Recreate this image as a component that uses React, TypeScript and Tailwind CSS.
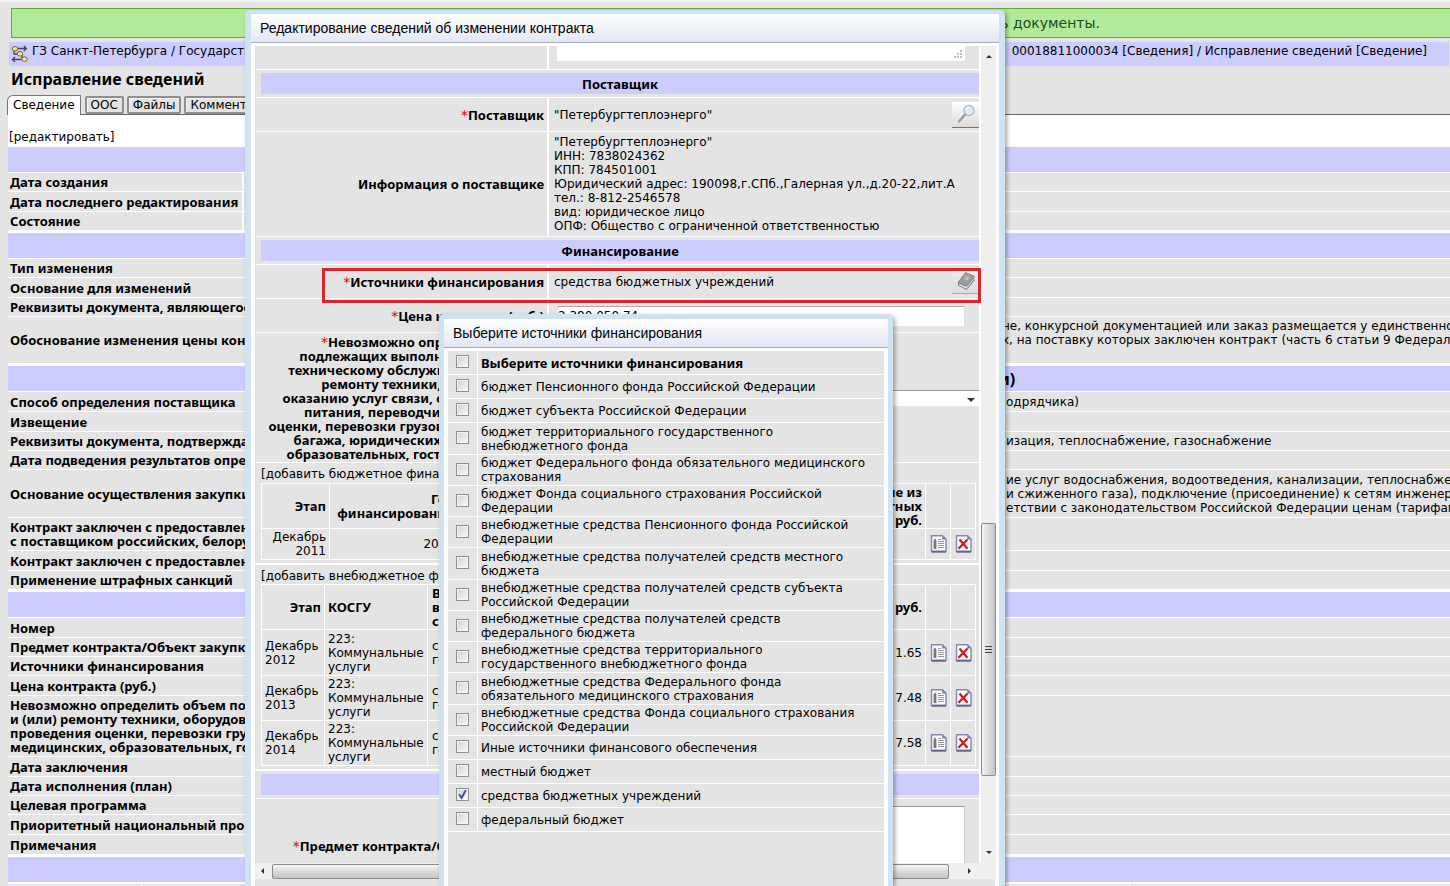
import type { ReactNode } from "react";

type Row = { label: ReactNode; value?: ReactNode; h: string };

const H19 = "h-[19px]";
const H20 = "h-[20px]";

const general: Row[] = [
  { label: "Дата создания", h: H19 },
  { label: "Дата последнего редактирования", h: H20 },
  { label: "Состояние", h: H19 },
];

const change: Row[] = [
  { label: "Тип изменения", h: H19 },
  { label: "Основание для изменений", h: H20 },
  { label: "Реквизиты документа, являющегося", h: H19 },
  {
    label: "Обоснование изменения цены контракта",
    value: (
      <>
        не, конкурсной документацией или заказ размещается у единственного
        <br />
        х, на поставку которых заключен контракт (часть 6 статьи 9 Федерального
        <br />
        &nbsp;
      </>
    ),
    h: "h-[47px]",
  },
];

const supplier: Row[] = [
  { label: "Способ определения поставщика", value: "одрядчика)", h: H20 },
  { label: "Извещение", h: H20 },
  { label: "Реквизиты документа, подтверждающего", value: "изация, теплоснабжение, газоснабжение", h: H19 },
  { label: "Дата подведения результатов определения", h: H19 },
  {
    label: "Основание осуществления закупки",
    value: (
      <>
        ие услуг водоснабжения, водоотведения, канализации, теплоснабжения
        <br />
        и сжиженного газа), подключение (присоединение) к сетям инженерно
        <br />
        етствии с законодательством Российской Федерации ценам (тарифам)
      </>
    ),
    h: "h-[48px]",
  },
  {
    label: (
      <>
        Контракт заключен с предоставлением
        <br />с поставщиком российских, белорусских
      </>
    ),
    h: "h-[33px]",
  },
  { label: "Контракт заключен с предоставлением", h: H20 },
  { label: "Применение штрафных санкций", h: H19 },
];

const contract: Row[] = [
  { label: "Номер", h: H20 },
  { label: "Предмет контракта/Объект закупки", h: H19 },
  { label: "Источники финансирования", h: H19 },
  { label: "Цена контракта (руб.)", h: H20 },
  {
    label: (
      <>
        Невозможно определить объем подлежащих
        <br />
        и (или) ремонту техники, оборудования
        <br />
        проведения оценки, перевозки грузов
        <br />
        медицинских, образовательных, гостиничных
      </>
    ),
    h: "h-[61px]",
  },
  { label: "Дата заключения", h: H20 },
  { label: "Дата исполнения (план)", h: H19 },
  { label: "Целевая программа", h: H19 },
  { label: "Приоритетный национальный проект", h: H20 },
  { label: "Примечания", h: H20 },
];

const PLAIN = "font-['DejaVu_Sans',sans-serif] text-[12px] font-normal";
const BOLD = "font-['Noto_Sans',sans-serif] text-[13px] font-bold";

function Section({ children }: { children?: ReactNode }) {
  return (
    <h2 className="mt-0.5 mb-px flex h-[25px] items-center bg-[#ccccff] pl-[991px] font-['Noto_Sans',sans-serif] text-[16px] font-bold">
      {children}
    </h2>
  );
}

function InfoTable({ rows, col }: { rows: Row[]; col: string }) {
  return (
    <table className="w-full table-fixed border-separate border-spacing-0 overflow-hidden">
      <tbody>
        {rows.map((r, i) => (
          <tr key={i}>
            <th
              scope="row"
              className={`${col} ${r.h} ${BOLD} border-b border-white bg-[#e4e4e4] p-0 pl-0.5 text-left align-middle whitespace-nowrap`}
            >
              {r.label}
            </th>
            <td className={`${PLAIN} overflow-hidden border-b border-white bg-[#e4e4e4] p-0 pl-1 align-middle whitespace-nowrap`}>
              {r.value}
            </td>
          </tr>
        ))}
      </tbody>
    </table>
  );
}

function PathIcon() {
  return (
    <svg width="18" height="18" viewBox="0 0 18 18" fill="none" aria-hidden="true">
      <g stroke="#44445c" strokeWidth="1.3">
        <path d="M6 3.5h9M12.8 1l2.6 2.5L12.8 6M3 5.5v3.5h4M11 9v4.5M12 14.5H1.5M4 12l-2.6 2.5L4 17" />
      </g>
      <g fill="#f1e884" stroke="#6e6a38" strokeWidth="1">
        <ellipse cx="4" cy="3.8" rx="2.8" ry="2.3" />
        <ellipse cx="9" cy="8.8" rx="2.8" ry="2.3" />
        <ellipse cx="13.5" cy="14.2" rx="2.8" ry="2.3" />
      </g>
    </svg>
  );
}

function MagnifierIcon() {
  return (
    <svg width="20" height="20" viewBox="0 0 20 20" fill="none" aria-hidden="true">
      <path d="M3 17.5 9 10.5" stroke="#9a9a9a" strokeWidth="2.4" strokeLinecap="round" />
      <circle cx="13" cy="6.5" r="5" fill="#dcebf5" stroke="#b0bac2" strokeWidth="1.4" />
      <path d="M10 6a3.2 3.2 0 0 1 3-2.8" stroke="#fff" strokeWidth="1.2" />
    </svg>
  );
}

function BookIcon() {
  return (
    <svg width="20" height="20" viewBox="0 0 20 20" aria-hidden="true">
      <path d="M2 11.5v3l8.5 4.5 8-9.5V6.5z" fill="#7d7d7d" />
      <path d="M3 12.5v1.6l7.3 3.7 7.4-9V7.3L10.3 16z" fill="#efefef" />
      <path d="M2 11.5 9.5 1.5l9 3.8L10.3 15.5z" fill="#9c9c9c" stroke="#808080" strokeWidth=".8" />
      <path d="m9.2 5 5 2.2M8 7l3 1.4M12 6.2l-1.2 3.2" stroke="#cacaca" strokeWidth="1" fill="none" />
    </svg>
  );
}

function SheetIcon({ kind }: { kind: "edit" | "delete" }) {
  return (
    <svg width="17" height="18" viewBox="0 0 17 18" fill="none" aria-hidden="true">
      <path d="M1.5.8h11L16 4.3v12H1.5z" fill="#fafafe" stroke="#8585ad" strokeWidth="1.4" strokeLinejoin="round" />
      <path d="M12.3.9v3.6h3.6z" fill="#77779c" />
      <path d="M1.5 17h14.5" stroke="#4f4f70" strokeWidth="1.2" />
      {kind === "edit" ? (
        <>
          <path d="M5 3.2 6.4 5.5V14H3.6V5.5z" fill="#777" />
          <path d="M8 4.5h3M8 6.5h6M8 8.5h6M8 10.5h6M8 12.5h6" stroke="#999" strokeWidth="1" />
        </>
      ) : (
        <path d="m4.5 4.5 8 9.3M12.5 4.5l-9 9.3" stroke="#cf1b22" strokeWidth="2.3" />
      )}
    </svg>
  );
}

function Arrow({ d }: { d: string }) {
  return (
    <svg width="8" height="8" viewBox="0 0 8 8" aria-hidden="true">
      <path d={d} fill="#333" />
    </svg>
  );
}

function DialogHeader({ children }: { children: ReactNode }) {
  return (
    <h2 className="flex h-[29px] shrink-0 items-center border-b border-[#a9abb5] bg-linear-to-b from-white to-[#e3e7f4] pl-[9px] font-['Liberation_Sans',Arial,sans-serif] text-[14px]">
      {children}
    </h2>
  );
}

const L = `${BOLD} w-[294px] border-r-2 border-b border-white p-0 pr-[3px] text-right align-middle whitespace-nowrap`;
const V = `${PLAIN} border-b border-white p-0 pl-[5px] text-left align-middle`;

function Star() {
  return <span className="font-['DejaVu_Sans',sans-serif] text-[14px] font-normal text-[#e00000]">*</span>;
}

function SectionRow({ children }: { children?: ReactNode }) {
  return (
    <tr>
      <th colSpan={2} className="h-7 border-b border-white p-0 pl-1.5 align-middle">
        <div className={`${BOLD} flex h-[21px] items-center justify-center bg-[#ccccff]`}>{children}</div>
      </th>
    </tr>
  );
}

const NT = "w-[715px] table-fixed border-separate border-spacing-0 border-t border-l border-white";
const NC = "border-r border-b border-white px-[3px] py-0 align-middle";

function ActionCells() {
  return (
    <>
      <td className={`${NC} w-[25px]`}>
        <button type="button" aria-label="Изменить" className="mx-auto block">
          <SheetIcon kind="edit" />
        </button>
      </td>
      <td className={`${NC} w-[25px]`}>
        <button type="button" aria-label="Удалить" className="mx-auto block">
          <SheetIcon kind="delete" />
        </button>
      </td>
    </>
  );
}

const extra = [
  { year: "2012", sum: "1.65", h: "h-[46px]" },
  { year: "2013", sum: "7.48", h: "h-[45px]" },
  { year: "2014", sum: "7.58", h: "h-[45px]" },
];

function EditDialog() {
  return (
    <section
      role="dialog"
      aria-label="Редактирование сведений об изменении контракта"
      className="absolute top-2 bottom-0 left-[245px] flex w-[760px] flex-col overflow-hidden rounded-t-[5px] border-x-6 border-t-4 border-[#d0e3f3] bg-white shadow-[2px_2px_4px_rgba(0,0,0,0.35)]"
    >
      <DialogHeader>Редактирование сведений об изменении контракта</DialogHeader>
      <div className="flex min-h-0 flex-1 gap-0.5 pt-[3px] pr-[3px] pl-1">
        <div className="relative min-w-0 flex-1 overflow-hidden">
          <table className="w-full table-fixed border-separate border-spacing-0 bg-[#e4e4e4]">
            <tbody>
              <tr>
                <th className={`${L} h-6`} />
                <td className={`${V} h-6`}>
                  <div className="flex h-[23px] items-start pl-[3px]">
                    <div className="flex h-[15px] w-[408px] items-end justify-end bg-white p-0.5">
                      <svg width="10" height="9" viewBox="0 0 10 9" aria-hidden="true">
                        <path d="M7 1h2M7 4h2M4 4h2M7 7h2M4 7h2M1 7h2" stroke="#aaa" strokeWidth="1.5" />
                      </svg>
                    </div>
                  </div>
                </td>
              </tr>
              <SectionRow>Поставщик</SectionRow>
              <tr>
                <th scope="row" className={`${L} h-[34px]`}>
                  <Star />
                  Поставщик
                </th>
                <td className={V}>
                  <div className="flex items-center justify-between">
                    "Петербургтеплоэнерго"
                    <button
                      type="button"
                      aria-label="Найти поставщика"
                      className="flex h-[26px] w-[27px] items-center justify-center border-b border-[#777] bg-linear-to-b from-white to-[#dcdcdc]"
                    >
                      <MagnifierIcon />
                    </button>
                  </div>
                </td>
              </tr>
              <tr>
                <th scope="row" className={`${L} h-[105px]`}>
                  Информация о поставщике
                </th>
                <td className={V}>
                  "Петербургтеплоэнерго"
                  <br />
                  ИНН: 7838024362
                  <br />
                  КПП: 784501001
                  <br />
                  Юридический адрес: 190098,г.СПб.,Галерная ул.,д.20-22,лит.А
                  <br />
                  тел.: 8-812-2546578
                  <br />
                  вид: юридическое лицо
                  <br />
                  ОПФ: Общество с ограниченной ответственностью
                </td>
              </tr>
              <SectionRow>Финансирование</SectionRow>
              <tr>
                <th scope="row" className={`${L} h-[34px]`}>
                  <Star />
                  Источники финансирования
                </th>
                <td className={V}>
                  <div className="flex items-center justify-between">
                    средства бюджетных учреждений
                    <button
                      type="button"
                      aria-label="Выбрать источники финансирования"
                      className="flex h-[25px] w-[27px] items-center justify-center border-b border-[#aaa] bg-linear-to-b from-[#eeeeee] to-[#dcdcdc]"
                    >
                      <BookIcon />
                    </button>
                  </div>
                </td>
              </tr>
              <tr>
                <th scope="row" className={`${L} h-[34px]`}>
                  <Star />
                  <label htmlFor="price">Цена контракта (руб.)</label>
                </th>
                <td className={V}>
                  <input
                    id="price"
                    defaultValue="2 380 050.74"
                    className="ml-[3px] block h-5 w-[408px] border border-t-[#aaa] border-r-[#ddd] border-b-white border-l-[#ddd] bg-white"
                  />
                </td>
              </tr>
              <tr>
                <th scope="row" className={`${L} h-[130px]`}>
                  <label htmlFor="volume">
                    <Star />
                    Невозможно определить объем
                    <br />
                    подлежащих выполнению работ по:
                    <br />
                    техническому обслуживанию и/или к
                    <br />
                    ремонту техники, оборудования,
                    <br />
                    оказанию услуг связи, общественного,
                    <br />
                    питания, переводчика, проведения
                    <br />
                    оценки, перевозки грузов, пассажиров и
                    <br />
                    багажа, юридических, медицинских,
                    <br />
                    образовательных, гостиничных услуг,
                  </label>
                </th>
                <td className={V}>
                  <div className="grid items-center pl-[3px]">
                    <select
                      id="volume"
                      className="col-start-1 row-start-1 h-4 w-full appearance-none border-t border-[#999] bg-white"
                    >
                      <option>Нет</option>
                      <option>Да</option>
                    </select>
                    <span className="pointer-events-none col-start-1 row-start-1 justify-self-end pt-1 pr-1">
                      <Arrow d="M0 2h8L4 6z" />
                    </span>
                  </div>
                </td>
              </tr>
              <tr>
                <td colSpan={2} className={`${PLAIN} h-[102px] border-b-2 border-white p-0 pt-1 pl-1.5 align-top`}>
                  <a href="#budget" className="block">
                    [добавить бюджетное финансирование]
                  </a>
                  <table className={`${NT} mt-0.5`}>
                    <thead>
                      <tr className={`${BOLD} text-right`}>
                        <th className={`${NC} h-[45px] w-[68px]`}>Этап</th>
                        <th className={`${NC} w-[128px]`}>
                          Год
                          <br />
                          финансирования
                        </th>
                        <th className={NC}>
                          Финансирование из
                          <br />
                          бюджетных
                          <br />
                          средств, руб.
                        </th>
                        <th className={`${NC} w-[25px]`} />
                        <th className={`${NC} w-[25px]`} />
                      </tr>
                    </thead>
                    <tbody>
                      <tr className="text-right">
                        <td className={`${NC} h-[31px]`}>
                          Декабрь
                          <br />
                          2011
                        </td>
                        <td className={NC}>2011</td>
                        <td className={NC} />
                        <ActionCells />
                      </tr>
                    </tbody>
                  </table>
                </td>
              </tr>
              <tr>
                <td colSpan={2} className={`${PLAIN} h-[206px] border-b-2 border-white p-0 pt-1 pl-1.5 align-top`}>
                  <a href="#extra" className="block">
                    [добавить внебюджетное финансирование]
                  </a>
                  <table className={`${NT} mt-px`}>
                    <thead>
                      <tr className={BOLD}>
                        <th className={`${NC} h-[45px] w-[63px] text-right`}>Этап</th>
                        <th className={`${NC} w-[103px] text-left`}>КОСГУ</th>
                        <th className={`${NC} w-[160px] pl-1 text-left`}>
                          Вид
                          <br />
                          внебюджетных
                          <br />
                          средств
                        </th>
                        <th className={`${NC} text-right`}>Сумма, руб.</th>
                        <th className={`${NC} w-[25px]`} />
                        <th className={`${NC} w-[25px]`} />
                      </tr>
                    </thead>
                    <tbody>
                      {extra.map((e) => (
                        <tr key={e.year}>
                          <td className={`${NC} ${e.h}`}>
                            Декабрь
                            <br />
                            {e.year}
                          </td>
                          <td className={NC}>
                            223:
                            <br />
                            Коммунальные
                            <br />
                            услуги
                          </td>
                          <td className={`${NC} pl-1`}>
                            средства
                            <br />
                            государственных
                          </td>
                          <td className={`${NC} text-right`}>{e.sum}</td>
                          <ActionCells />
                        </tr>
                      ))}
                    </tbody>
                  </table>
                </td>
              </tr>
              <SectionRow />
              <tr>
                <th scope="row" className={`${L} h-[95px]`}>
                  <label htmlFor="subject">
                    <Star />
                    Предмет контракта/Объект закупки
                  </label>
                </th>
                <td className={V}>
                  <textarea
                    id="subject"
                    className="ml-[3px] block h-20 w-[408px] resize-none border border-t-[#999] border-r-[#ccc] border-b-white border-l-[#ccc] bg-white"
                  />
                </td>
              </tr>
            </tbody>
          </table>
        </div>
        <div className="flex w-[15px] shrink-0 flex-col items-center bg-[#efefef] py-1.5">
          <Arrow d="M1 6h6L4 3z" />
          <div className="flex-[464]" />
          <div className="flex w-[15px] flex-[252] flex-col items-center justify-center gap-0.5 rounded-xs border border-[#8b8b8b] bg-linear-to-r from-[#f3f3f3] to-[#c4c4c8]">
            <i className="h-px w-[7px] bg-[#444]" />
            <i className="h-px w-[7px] bg-[#444]" />
            <i className="h-px w-[7px] bg-[#444]" />
          </div>
          <div className="flex-[73]" />
          <Arrow d="M1 2h6L4 5z" />
        </div>
      </div>
      <div className="mr-[3px] ml-1 flex h-4 shrink-0 items-center bg-[#efefef] pr-[22px] pl-[3px]">
        <Arrow d="M6 1v6L3 4z" />
        <div className="ml-1.5 h-[15px] w-[677px] rounded-xs border border-[#8b8b8b] bg-linear-to-b from-[#f3f3f3] to-[#c4c4c8]" />
        <div className="flex-1" />
        <Arrow d="M2 1v6l3-3z" />
      </div>
      <div className="mr-1 ml-1 h-[7px] shrink-0 bg-[#e4e4e4]" />
    </section>
  );
}

const S24 = "h-6";
const S31 = "h-[31px]";
const S32 = "h-8";

const sources: { name: string; h: string; checked?: boolean }[] = [
  { name: "бюджет Пенсионного фонда Российской Федерации", h: S24 },
  { name: "бюджет субъекта Российской Федерации", h: S24 },
  { name: "бюджет территориального государственного\nвнебюджетного фонда", h: S32 },
  { name: "бюджет Федерального фонда обязательного медицинского\nстрахования", h: S31 },
  { name: "бюджет Фонда социального страхования Российской\nФедерации", h: S31 },
  { name: "внебюджетные средства Пенсионного фонда Российской\nФедерации", h: S31 },
  { name: "внебюджетные средства получателей средств местного\nбюджета", h: S32 },
  { name: "внебюджетные средства получателей средств субъекта\nРоссийской Федерации", h: S31 },
  { name: "внебюджетные средства получателей средств\nфедерального бюджета", h: S31 },
  { name: "внебюджетные средства территориального\nгосударственного внебюджетного фонда", h: S31 },
  { name: "внебюджетные средства Федерального фонда\nобязательного медицинского страхования", h: S32 },
  { name: "внебюджетные средства Фонда социального страхования\nРоссийской Федерации", h: S31 },
  { name: "Иные источники финансового обеспечения", h: S24 },
  { name: "местный бюджет", h: S24 },
  { name: "средства бюджетных учреждений", h: S24, checked: true },
  { name: "федеральный бюджет", h: S24 },
];

function Check({ id, checked }: { id: string; checked?: boolean }) {
  return (
    <span className="mx-auto grid size-[13px]">
      <input
        id={id}
        type="checkbox"
        defaultChecked={checked}
        className="peer col-start-1 row-start-1 size-[13px] appearance-none border border-[#8e8f8f] bg-linear-to-br from-[#cfd2d8] to-[#f8f8f8] shadow-[inset_0_0_0_1px_#f4f4f4]"
      />
      <svg
        viewBox="0 0 13 13"
        className="pointer-events-none invisible col-start-1 row-start-1 size-[13px] peer-checked:visible"
        aria-hidden="true"
      >
        <path d="m3.2 6.2 2.4 3.6 4.2-7.6" fill="none" stroke="#3f5295" strokeWidth="1.9" />
      </svg>
    </span>
  );
}

function SourcesDialog() {
  const left = "w-[30px] border-r border-b border-white p-0 pb-0.5 align-middle";
  const right = "border-b border-white p-0 pl-[3px] text-left align-middle whitespace-pre";
  return (
    <section
      role="dialog"
      aria-label="Выберите источники финансирования"
      className="absolute top-[312px] bottom-0 left-[439px] flex w-[454px] flex-col overflow-hidden rounded-t-[5px] border-x-5 border-t-5 border-[#d0e3f3] bg-white shadow-[2px_2px_4px_rgba(0,0,0,0.35)]"
    >
      <DialogHeader>Выберите источники финансирования</DialogHeader>
      <div className="mx-1 mt-[3px] min-h-0 flex-1 overflow-hidden bg-[#e4e4e4]">
        <table className={`${PLAIN} w-full table-fixed border-separate border-spacing-0`}>
          <thead>
            <tr>
              <th className={`${left} ${S24}`}>
                <Check id="src-all" />
              </th>
              <th className={`${right} ${BOLD}`}>
                <label htmlFor="src-all">Выберите источники финансирования</label>
              </th>
            </tr>
          </thead>
          <tbody>
            {sources.map((s, i) => (
              <tr key={s.name}>
                <td className={`${left} ${s.h}`}>
                  <Check id={`src-${i}`} checked={s.checked} />
                </td>
                <td className={right}>
                  <label htmlFor={`src-${i}`} className="block">
                    {s.name}
                  </label>
                </td>
              </tr>
            ))}
          </tbody>
        </table>
      </div>
    </section>
  );
}

const TAB = "mt-px h-[18px] rounded-xs border-2 border-[#8f8f8f] px-1 leading-[14px] shadow-[inset_1px_1px_0_#f4f4f4]";

export default function App() {
  return (
    <div className="relative h-screen overflow-hidden border-t-2 border-[#f2f2f2] bg-[#e4e4e4] font-['DejaVu_Sans',sans-serif] text-[12px] leading-[14px] text-black">
      <main>
        <div className="mt-1.5 ml-[11px] flex h-[30px] items-center border border-r-0 border-[#62ab3c] bg-[#b1ea98]">
          <p className="w-[1088px] text-right text-[14px] text-[#234a1c]">подписать документы.</p>
        </div>
        <nav className="mt-1 mr-px ml-[9px] flex h-6 items-start bg-[#ccccff] pr-[22px] pl-0.5">
          <span className="mt-[3px]">
            <PathIcon />
          </span>
          <a href="#root" className="mt-0.5 ml-[3px] whitespace-nowrap">
            ГЗ Санкт-Петербурга / Государственный
          </a>
          <a href="#record" className="mt-0.5 ml-auto whitespace-nowrap">
            00018811000034 [Сведения] / Исправление сведений [Сведение]
          </a>
        </nav>
        <h1 className="mt-0.5 ml-[11px] h-[22px] font-['Noto_Sans',sans-serif] text-[16px] leading-[22px] font-bold">Исправление сведений</h1>
        <div className="mt-[5px] flex h-5 pl-[7px]">
          <button type="button" className="h-5 rounded-tl-md border-t border-r border-l border-[#777] bg-white px-[5px] pb-px">
            Сведение
          </button>
          <div className="flex flex-1 gap-[3px] border-b border-[#666] pl-1">
            <button type="button" className={TAB}>
              ООС
            </button>
            <button type="button" className={TAB}>
              Файлы
            </button>
            <button type="button" className={TAB}>
              Комментарии
            </button>
          </div>
        </div>
        <div className="ml-2 bg-white">
          <div className="flex h-[30px] items-end pb-px pl-px">
            <a href="#edit">[редактировать]</a>
          </div>
          <Section />
          <InfoTable rows={general} col="w-[236px] border-r-2" />
          <Section />
          <InfoTable rows={change} col="w-[990px]" />
          <Section>и)</Section>
          <InfoTable rows={supplier} col="w-[994px]" />
          <Section />
          <InfoTable rows={contract} col="w-[994px]" />
          <Section />
          <div className="flex h-6 gap-px pt-px">
            <div className="w-[133px] bg-[#e4e4e4]" />
            <div className="w-[868px] bg-[#e4e4e4]" />
            <div className="w-[118px] bg-[#e4e4e4]" />
            <div className="flex-1 bg-[#e4e4e4]" />
          </div>
        </div>
      </main>
      <EditDialog />
      <div className="pointer-events-none absolute top-[266px] left-[322px] h-[35px] w-[659px] border-3 border-[#d8262c]" />
      <SourcesDialog />
    </div>
  );
}
